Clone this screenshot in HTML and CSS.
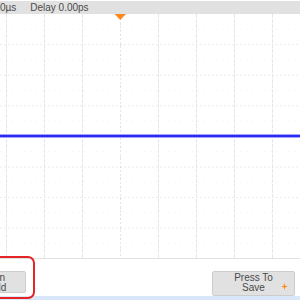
FILE: index.html
```html
<!DOCTYPE html>
<html lang="en">
<head>
    <meta charset="UTF-8">
    <meta name="viewport" content="width=device-width, initial-scale=1.0">
    <title>Scope</title>
    <link rel="stylesheet" href="styles.css">
</head>
<body>
    <div class="ventana">
        <div class="barra-info">
            <span class="dato dato-tiempo">10.0µs</span>
            <span class="dato">Delay 0.00ps</span>
        </div>
        <div class="pantalla">
            <svg class="rejilla" width="300" height="245" viewBox="0 0 300 245">
                <g class="menores">
                    <line x1="0" y1="15.3" x2="300" y2="15.3"/>
                    <line x1="0" y1="45.9" x2="300" y2="45.9"/>
                    <line x1="0" y1="76.5" x2="300" y2="76.5"/>
                    <line x1="0" y1="107.1" x2="300" y2="107.1"/>
                    <line x1="0" y1="137.7" x2="300" y2="137.7"/>
                    <line x1="0" y1="168.3" x2="300" y2="168.3"/>
                    <line x1="0" y1="198.9" x2="300" y2="198.9"/>
                    <line x1="0" y1="229.5" x2="300" y2="229.5"/>
                </g>
                <g class="verticales">
                    <line x1="6.5" y1="0" x2="6.5" y2="245"/>
                    <line x1="44.5" y1="0" x2="44.5" y2="245"/>
                    <line x1="82.5" y1="0" x2="82.5" y2="245"/>
                    <line x1="158.5" y1="0" x2="158.5" y2="245"/>
                    <line x1="196.5" y1="0" x2="196.5" y2="245"/>
                    <line x1="234.5" y1="0" x2="234.5" y2="245"/>
                    <line x1="272.5" y1="0" x2="272.5" y2="245"/>
                </g>
                <g class="horizontales">
                    <line x1="0" y1="30.6" x2="300" y2="30.6"/>
                    <line x1="0" y1="61.2" x2="300" y2="61.2"/>
                    <line x1="0" y1="91.8" x2="300" y2="91.8"/>
                    <line x1="0" y1="153" x2="300" y2="153"/>
                    <line x1="0" y1="183.6" x2="300" y2="183.6"/>
                    <line x1="0" y1="214.2" x2="300" y2="214.2"/>
                </g>
                <line class="centro" x1="120.5" y1="0" x2="120.5" y2="245"/>
                <line class="marcas-v" x1="120.5" y1="0" x2="120.5" y2="245"/>
                <line class="borde" x1="0" y1="244.5" x2="300" y2="244.5"/>
                <line class="traza-halo" x1="0" y1="122" x2="300" y2="122"/>
                <line class="traza" x1="0" y1="122" x2="300" y2="122"/>
                <polygon class="disparo" points="114.5,0 126,0 120.3,6"/>
            </svg>
        </div>
        <div class="controles">
            <div class="boton boton-izq">Run<br>Hold</div>
            <div class="boton boton-der">
                Press To<br>Save
                <svg class="estrella" width="7" height="7" viewBox="0 0 7 7">
                    <polygon points="3.5,0 4.3,2.7 7,3.5 4.3,4.3 3.5,7 2.7,4.3 0,3.5 2.7,2.7"/>
                </svg>
            </div>
            <div class="resaltado"></div>
        </div>
        <div class="barra-estado"></div>
    </div>
</body>
</html>
```

FILE: styles.css
```css
body {
    margin: 0;
    padding: 0;
    background-color: #ffffff;
    font-family: "Liberation Sans", Arial, sans-serif;
    overflow: hidden;
}

.ventana {
    width: 300px;
    height: 300px;
    display: flex;
    flex-direction: column;
    overflow: hidden;
    padding-top: 1px;
    box-sizing: border-box;
}

.barra-info {
    height: 13px;
    flex: none;
    display: flex;
    align-items: center;
    gap: 14px;
    background-color: #e1e1e1;
    color: #4a4a4a;
    font-size: 10px;
    white-space: nowrap;
}

.dato-tiempo {
    margin-left: -14px;
}

.pantalla {
    height: 245px;
    flex: none;
}

.rejilla {
    display: block;
}

.verticales line {
    stroke: #e6e6e6;
    stroke-width: 1;
    stroke-dasharray: 4 1;
}

.horizontales line {
    stroke: #ececec;
    stroke-width: 1;
    stroke-dasharray: 2 2;
}

.menores line {
    stroke: #f0f0f0;
    stroke-width: 1;
    stroke-dasharray: 1 5;
}

.centro {
    stroke: #e6e6e6;
    stroke-width: 1;
    stroke-dasharray: 2 2;
}

.marcas-v {
    stroke: #d6d6d6;
    stroke-width: 1;
    stroke-dasharray: 1 9.2;
}

.borde {
    stroke: #e2e2e2;
    stroke-width: 1;
}

.traza-halo {
    stroke: #a0a0ff;
    stroke-width: 4;
}

.traza {
    stroke: #2a2af4;
    stroke-width: 2;
}

.disparo {
    fill: #ff8a1c;
}

.controles {
    height: 37px;
    flex: none;
    position: relative;
    display: flex;
    justify-content: space-between;
    align-items: flex-start;
    padding-top: 12px;
    box-sizing: border-box;
}

.boton {
    height: 22px;
    box-sizing: border-box;
    background-color: #e1e1e1;
    border: 1px solid #cdcdcd;
    border-radius: 2px;
    color: #4a4a4a;
    font-size: 10px;
    line-height: 10px;
    text-align: center;
    padding-top: 1px;
    position: relative;
}

.boton-izq {
    width: 60px;
    margin-left: -34px;
}

.boton-der {
    width: 83px;
    height: 25px;
    margin-right: 5px;
}

.estrella {
    position: absolute;
    right: 6px;
    top: 11px;
    fill: #ff8a1c;
}

.resaltado {
    position: absolute;
    left: -20px;
    top: -3px;
    width: 51px;
    height: 39px;
    border: 2px solid #e52525;
    border-radius: 7px;
}

.barra-estado {
    height: 4px;
    flex: none;
    background-color: #d9e7f8;
}
```
